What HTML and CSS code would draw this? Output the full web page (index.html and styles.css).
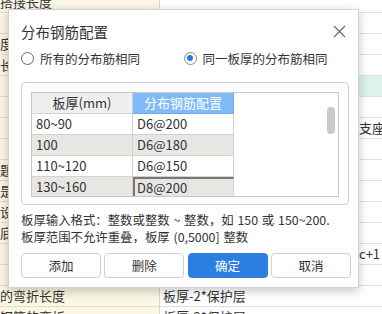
FILE: index.html
```html
<!DOCTYPE html>
<html lang="zh">

<head>
    <meta charset="UTF-8" />
    <title>分布钢筋配置</title>
    <link rel="stylesheet" href="styles.css">
</head>

<body>

    <div class="sheet">
        <div class="sheet-row"><div class="c1">搭接长度</div><div class="c2"></div></div>
        <div class="sheet-row"><div class="c1"></div><div class="c2"></div></div>
        <div class="sheet-row"><div class="c1">度</div><div class="c2"></div></div>
        <div class="sheet-row"><div class="c1">长</div><div class="c2"></div></div>
        <div class="sheet-row"><div class="c1"></div><div class="c2 green"></div></div>
        <div class="sheet-row"><div class="c1"></div><div class="c2"></div></div>
        <div class="sheet-row"><div class="c1"></div><div class="c2 far">支座</div></div>
        <div class="sheet-row"><div class="c1"></div><div class="c2"></div></div>
        <div class="sheet-row"><div class="c1">题</div><div class="c2"></div></div>
        <div class="sheet-row"><div class="c1">是</div><div class="c2"></div></div>
        <div class="sheet-row"><div class="c1">设</div><div class="c2"></div></div>
        <div class="sheet-row"><div class="c1">底</div><div class="c2"></div></div>
        <div class="sheet-row"><div class="c1"></div><div class="c2 far">c+1</div></div>
        <div class="sheet-row"><div class="c1"></div><div class="c2"></div></div>
        <div class="sheet-row"><div class="c1">的弯折长度</div><div class="c2">板厚-2*保护层</div></div>
        <div class="sheet-row"><div class="c1">钢筋的弯折</div><div class="c2">板厚-2*保护层</div></div>
    </div>

    <div class="dialog">
        <div class="dialog-head">
            <span class="dialog-title">分布钢筋配置</span>
            <svg class="close" width="13" height="13" viewBox="0 0 13 13">
                <path d="M1 1 L12 12 M12 1 L1 12" stroke="#666" stroke-width="1.1" fill="none" />
            </svg>
        </div>

        <div class="radio-row">
            <label class="radio"><span class="dot"></span>所有的分布筋相同</label>
            <label class="radio checked"><span class="dot"></span>同一板厚的分布筋相同</label>
        </div>

        <div class="group">
            <div class="list">
                <div class="grid">
                    <div class="cell head">板厚(mm)</div>
                    <div class="cell head blue">分布钢筋配置</div>
                    <div class="cell">80~90</div>
                    <div class="cell">D6@200</div>
                    <div class="cell gray">100</div>
                    <div class="cell gray">D6@180</div>
                    <div class="cell">110~120</div>
                    <div class="cell">D6@150</div>
                    <div class="cell gray">130~160</div>
                    <div class="cell gray selected">D8@200</div>
                </div>
                <div class="thumb"></div>
            </div>
        </div>

        <div class="help">
            板厚输入格式：整数或整数 ~ 整数，如 150 或 150~200.<br>
            板厚范围不允许重叠，板厚 (0,5000] 整数
        </div>

        <div class="btn-row">
            <button class="btn">添加</button>
            <button class="btn">删除</button>
            <button class="btn primary">确定</button>
            <button class="btn">取消</button>
        </div>
    </div>

</body>

</html>
```

FILE: styles.css
```css
body {
    margin: 0;
    width: 382px;
    height: 314px;
    overflow: hidden;
    position: relative;
    font-family: "Noto Sans CJK SC", "Noto Sans", sans-serif;
    color: #333;
    background-color: #fff;
}

/* table behind the dialog */
.sheet {
    margin-top: -8px;
}

.sheet-row {
    display: flex;
    height: 21px;
    font-size: 13px;
    line-height: 20px;
}

.c1 {
    width: 160px;
    box-sizing: border-box;
    background-color: #fbf7e4;
    border-bottom: 1px solid #e2decb;
    border-right: 1px solid #d8d8d8;
    white-space: nowrap;
    overflow: hidden;
}

.c2 {
    flex: 1;
    padding-left: 3px;
    border-bottom: 1px solid #e0e0e0;
    white-space: nowrap;
    overflow: hidden;
}

.c2.green {
    background-color: #dcf3e9;
}

.c2.far {
    padding-left: 199px;
}

/* dialog */
.dialog {
    position: absolute;
    left: 8px;
    top: 9px;
    width: 351px;
    height: 279px;
    box-sizing: border-box;
    padding: 0 12px;
    background-color: #fff;
    border: 1px solid #d4d4d4;
    box-shadow: 0 3px 10px rgba(0, 0, 0, 0.22);
}

.dialog-head {
    display: flex;
    align-items: center;
    justify-content: space-between;
    height: 40px;
    padding-top: 2px;
    box-sizing: border-box;
}

.dialog-title {
    font-size: 14.5px;
    color: #333;
}

.radio-row {
    display: flex;
    height: 16px;
    align-items: center;
    font-size: 12.5px;
}

.radio {
    display: flex;
    align-items: center;
    gap: 6px;
    width: 168px;
}

.dot {
    width: 11px;
    height: 11px;
    border: 1px solid #666;
    border-radius: 50%;
    position: relative;
}

.radio.checked .dot {
    border-color: #888;
}

.radio.checked .dot::after {
    content: "";
    position: absolute;
    left: 2.5px;
    top: 2.5px;
    width: 6px;
    height: 6px;
    border-radius: 50%;
    background-color: #1f7ae0;
}

.group {
    margin-top: 16px;
    width: 328px;
    height: 123px;
    box-sizing: border-box;
    padding: 9px;
    border: 1px solid #d0d0d0;
    border-radius: 4px;
}

.list {
    position: relative;
    height: 103px;
    border: 1px solid #c8c8c8;
    overflow: hidden;
}

.grid {
    display: grid;
    grid-template-columns: 101px 101px;
    grid-auto-rows: 21px;
}

.cell {
    box-sizing: border-box;
    padding-left: 4px;
    font-size: 13px;
    line-height: 20px;
    border-right: 1px solid #d2d2d2;
    border-bottom: 1px solid #d2d2d2;
    background-color: #fff;
}

.cell.head {
    text-align: center;
    padding-left: 0;
    background-color: #efefef;
}

.cell.blue {
    background-color: #80bbf7;
    color: #fff;
    border-color: #6fa8e6;
}

.cell.gray {
    background-color: #e7e6e3;
}

.cell.selected {
    border-top: 2px solid #777;
    border-left: 2px solid #777;
    padding-left: 2px;
    line-height: 18px;
}

.thumb {
    position: absolute;
    left: 295px;
    top: 14px;
    width: 8px;
    height: 27px;
    border-radius: 4px;
    background-color: #c9c9c9;
}

.help {
    margin-top: 7px;
    font-size: 12.4px;
    line-height: 17px;
    color: #333;
    white-space: nowrap;
    word-spacing: 1px;
}

.btn-row {
    display: grid;
    grid-template-columns: repeat(4, 80px);
    column-gap: 3.3px;
    margin-top: 7px;
}

.btn {
    height: 25px;
    font-family: inherit;
    font-size: 12.5px;
    color: #333;
    background-color: #fff;
    border: 1px solid #d0d0d0;
    border-radius: 4px;
}

.btn.primary {
    background-color: #2b7fe0;
    border-color: #2b7fe0;
    color: #fff;
}
```
